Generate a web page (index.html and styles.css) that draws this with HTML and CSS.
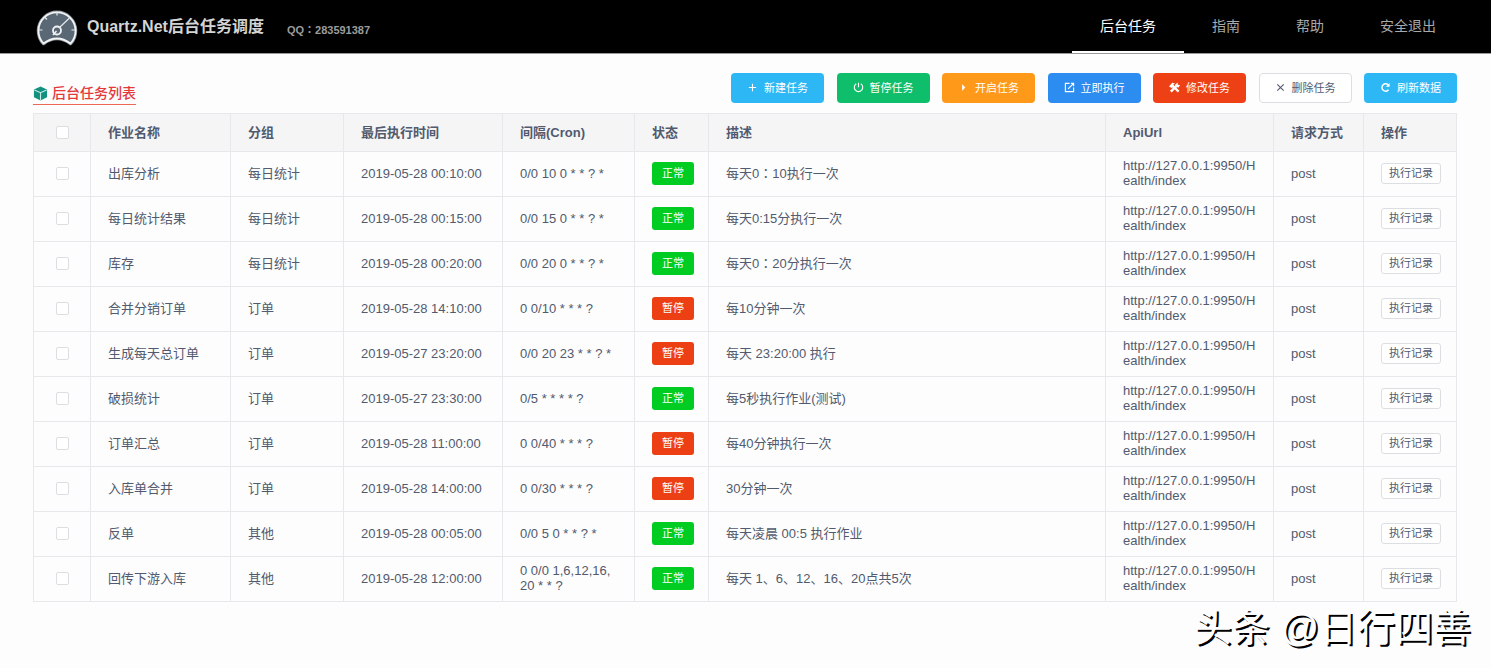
FILE: index.html
```html
<!DOCTYPE html>
<html lang="zh-CN">
<head>
<meta charset="utf-8">
<title>Quartz.Net后台任务调度</title>
<link rel="stylesheet" href="styles.css">
</head>
<body>
<header class="header">
  <svg class="logo" viewBox="0 0 42 38" aria-hidden="true">
    <path d="M7.500 35.500A18.500 18.500 0 1 1 34.500 35.500Q21 25.500 7.500 35.500Z" fill="#5a6876" stroke="#8d9399" stroke-width="3.500" stroke-linejoin="round"/>
    <path d="M7.500 35.500A18.500 18.500 0 1 1 34.500 35.500Q21 25.500 7.500 35.500Z" fill="#5a6876" stroke="#f2f4f5" stroke-width="1.800" stroke-linejoin="round"/>
    <path d="M21 4v3.500M8.500 9l2.500 2.500M3 22h3.500M35.500 22H39M33.500 10L23.500 19.500" fill="none" stroke="#e4e8ea" stroke-width="1.200"/>
    <circle cx="21" cy="22.500" r="4" fill="#5a6876" stroke="#f2f4f5" stroke-width="1.800"/>
    <path d="M17 27l3.500-4" stroke="#f2f4f5" stroke-width="1.500"/>
  </svg>
  <h1 class="brand">Quartz.Net后台任务调度</h1>
  <span class="contact">QQ<span class="colon" lang="zh-TW">：</span>283591387</span>
  <nav class="nav">
    <a class="nav-link active" href="#">后台任务</a>
    <a class="nav-link" href="#">指南</a>
    <a class="nav-link" href="#">帮助</a>
    <a class="nav-link" href="#">安全退出</a>
  </nav>
</header>
<main class="main">
  <div class="toolbar">
    <h2 class="title">
      <svg class="cube" viewBox="0 0 16 16" aria-hidden="true"><path d="M8 .5l7 3.200v8.200L8 15.500l-7-3.600V3.700z" fill="#12917f"/><path d="M1.500 4.200L8 7.200l6.500-3M8 7.200v8" fill="none" stroke="#c9ebe4" stroke-width="1.200"/></svg>
      后台任务列表
    </h2>
    <div class="actions">
      <button class="btn info" type="button"><svg class="icon" viewBox="0 0 12 12"><path d="M6 2v8M2 6h8"/></svg>新建任务</button>
      <button class="btn success" type="button"><svg class="icon" viewBox="0 0 12 12"><path d="M6 .8v5M3.500 2a4.600 4.600 0 1 0 5 0"/></svg>暂停任务</button>
      <button class="btn warning" type="button"><svg class="icon" viewBox="0 0 12 12"><path class="solid" d="M4.500 2.500L8 6 4.500 9.500z"/></svg>开启任务</button>
      <button class="btn primary" type="button"><svg class="icon" viewBox="0 0 12 12"><path d="M6 1.500H1.500v9h9V6M7.500 1.500h3v3M10.500 1.500L4.500 7.500"/></svg>立即执行</button>
      <button class="btn error" type="button"><svg class="icon" viewBox="0 0 12 12"><path d="M2 10.500L9 3.500M3 3l7.500 7.500" stroke-width="2.600"/><path class="solid" d="M0 5L3.500 .8 6.500 1.500 4.500 3l1.500 2L3 6.500zM6.500 3l3-2.500V3l2.500.3L10.500 6 7.500 5.500z"/></svg>修改任务</button>
      <button class="btn plain" type="button"><svg class="icon" viewBox="0 0 12 12"><path d="M2.500 2.500l7 7M9.500 2.500l-7 7"/></svg>删除任务</button>
      <button class="btn info" type="button"><svg class="icon" viewBox="0 0 12 12"><path d="M9.300 8.500A4 4 0 1 1 9 3.200" stroke-width="1.600"/><path class="solid" d="M10.500 1v4.200H6.300z"/></svg>刷新数据</button>
    </div>
  </div>
  <table class="table">
    <colgroup>
      <col class="c-check"><col class="c-name"><col class="c-group"><col class="c-time"><col class="c-cron"><col class="c-state"><col><col class="c-url"><col class="c-method"><col class="c-op">
    </colgroup>
    <thead>
      <tr><th><input type="checkbox" aria-label="全选"></th><th>作业名称</th><th>分组</th><th>最后执行时间</th><th>间隔(Cron)</th><th>状态</th><th>描述</th><th>ApiUrl</th><th>请求方式</th><th>操作</th></tr>
    </thead>
    <tbody>
      <tr><td><input type="checkbox" aria-label="出库分析"></td><td>出库分析</td><td>每日统计</td><td>2019-05-28 00:10:00</td><td>0/0 10 0 * * ? *</td><td><span class="tag ok">正常</span></td><td>每天0<span class="colon" lang="zh-TW">：</span>10执行一次</td><td>http://127.0.0.1:9950/Health/index</td><td>post</td><td><button class="log" type="button">执行记录</button></td></tr>
      <tr><td><input type="checkbox" aria-label="每日统计结果"></td><td>每日统计结果</td><td>每日统计</td><td>2019-05-28 00:15:00</td><td>0/0 15 0 * * ? *</td><td><span class="tag ok">正常</span></td><td>每天0:15分执行一次</td><td>http://127.0.0.1:9950/Health/index</td><td>post</td><td><button class="log" type="button">执行记录</button></td></tr>
      <tr><td><input type="checkbox" aria-label="库存"></td><td>库存</td><td>每日统计</td><td>2019-05-28 00:20:00</td><td>0/0 20 0 * * ? *</td><td><span class="tag ok">正常</span></td><td>每天0<span class="colon" lang="zh-TW">：</span>20分执行一次</td><td>http://127.0.0.1:9950/Health/index</td><td>post</td><td><button class="log" type="button">执行记录</button></td></tr>
      <tr><td><input type="checkbox" aria-label="合并分销订单"></td><td>合并分销订单</td><td>订单</td><td>2019-05-28 14:10:00</td><td>0 0/10 * * * ?</td><td><span class="tag paused">暂停</span></td><td>每10分钟一次</td><td>http://127.0.0.1:9950/Health/index</td><td>post</td><td><button class="log" type="button">执行记录</button></td></tr>
      <tr><td><input type="checkbox" aria-label="生成每天总订单"></td><td>生成每天总订单</td><td>订单</td><td>2019-05-27 23:20:00</td><td>0/0 20 23 * * ? *</td><td><span class="tag paused">暂停</span></td><td>每天 23:20:00 执行</td><td>http://127.0.0.1:9950/Health/index</td><td>post</td><td><button class="log" type="button">执行记录</button></td></tr>
      <tr><td><input type="checkbox" aria-label="破损统计"></td><td>破损统计</td><td>订单</td><td>2019-05-27 23:30:00</td><td>0/5 * * * * ?</td><td><span class="tag ok">正常</span></td><td>每5秒执行作业(测试)</td><td>http://127.0.0.1:9950/Health/index</td><td>post</td><td><button class="log" type="button">执行记录</button></td></tr>
      <tr><td><input type="checkbox" aria-label="订单汇总"></td><td>订单汇总</td><td>订单</td><td>2019-05-28 11:00:00</td><td>0 0/40 * * * ?</td><td><span class="tag paused">暂停</span></td><td>每40分钟执行一次</td><td>http://127.0.0.1:9950/Health/index</td><td>post</td><td><button class="log" type="button">执行记录</button></td></tr>
      <tr><td><input type="checkbox" aria-label="入库单合并"></td><td>入库单合并</td><td>订单</td><td>2019-05-28 14:00:00</td><td>0 0/30 * * * ?</td><td><span class="tag paused">暂停</span></td><td>30分钟一次</td><td>http://127.0.0.1:9950/Health/index</td><td>post</td><td><button class="log" type="button">执行记录</button></td></tr>
      <tr><td><input type="checkbox" aria-label="反单"></td><td>反单</td><td>其他</td><td>2019-05-28 00:05:00</td><td>0/0 5 0 * * ? *</td><td><span class="tag ok">正常</span></td><td>每天凌晨 00:5 执行作业</td><td>http://127.0.0.1:9950/Health/index</td><td>post</td><td><button class="log" type="button">执行记录</button></td></tr>
      <tr><td><input type="checkbox" aria-label="回传下游入库"></td><td>回传下游入库</td><td>其他</td><td>2019-05-28 12:00:00</td><td>0 0/0 1,6,12,16,20 * * ?</td><td><span class="tag ok">正常</span></td><td>每天 1、6、12、16、20点共5次</td><td>http://127.0.0.1:9950/Health/index</td><td>post</td><td><button class="log" type="button">执行记录</button></td></tr>
    </tbody>
  </table>
</main>
<footer class="signature">头条 @日行四善</footer>
</body>
</html>
```
FILE: styles.css
```css
* {
  box-sizing: border-box;
}

body {
  margin: 0;
  background: #fdfdfd;
  color: #515a6e;
  font: 13px/15px "Liberation Sans", "Noto Sans CJK SC", sans-serif;
}

button {
  font-family: inherit;
  cursor: pointer;
}

.colon {
  font-family: "Noto Sans CJK TC", sans-serif;
  line-height: 1;
}

.header {
  display: flex;
  align-items: center;
  height: 54px;
  padding: 0 27px 0 36px;
  background: #000;
  border-bottom: 1px solid #999;
}

.logo {
  width: 42px;
  height: 38px;
}

.brand {
  margin: 0 23px 0 9px;
  color: #d4d4d4;
  font-size: 16px;
  line-height: 24px;
}

.contact {
  padding-top: 8px;
  color: #9c9c9c;
  font-size: 11px;
  font-weight: bold;
}

.nav {
  display: flex;
  align-self: stretch;
  margin-left: auto;
}

.nav-link {
  padding: 0 28px;
  border-bottom: 2px solid transparent;
  color: #a9a9a9;
  font-size: 14px;
  line-height: 52px;
  text-decoration: none;
}

.nav-link.active {
  border-bottom-color: #fff;
  color: #fff;
}

.main {
  padding: 19px 34px 0 33px;
}

.toolbar {
  display: flex;
  align-items: flex-end;
  justify-content: space-between;
  padding-bottom: 10px;
}

.title {
  display: flex;
  align-items: center;
  gap: 4px;
  margin: 0 0 -2px;
  border-bottom: 1px solid #ec6a55;
  color: #e4393c;
  font-size: 14px;
  font-weight: 500;
  line-height: 22px;
}

.cube {
  width: 15px;
  height: 15px;
}

.actions {
  display: flex;
  justify-content: space-between;
  width: 726px;
}

.btn {
  display: flex;
  align-items: center;
  justify-content: center;
  gap: 6px;
  width: 93px;
  height: 30px;
  padding: 0 0 2px;
  border: 1px solid transparent;
  border-radius: 4px;
  color: #fff;
  font-size: 11px;
}

.icon {
  width: 11px;
  height: 11px;
  fill: none;
  stroke: currentColor;
  stroke-width: 1.2;
}

.solid {
  fill: currentColor;
  stroke: none;
}

.info { background: #2db7f5; }
.success { background: #0fbe6b; }
.warning { background: #ff991a; }
.primary { background: #2d8cf0; }
.error { background: #ed4014; }

.plain {
  border-color: #dcdee2;
  background: #fff;
  color: #515a6e;
}

.table {
  width: 100%;
  table-layout: fixed;
  border-collapse: collapse;
  border: 1px solid #dcdee2;
}

.c-check { width: 57px; }
.c-name { width: 140px; }
.c-group { width: 113px; }
.c-time { width: 159px; }
.c-cron { width: 132px; }
.c-state { width: 74px; }
.c-url { width: 168px; }
.c-method { width: 90px; }
.c-op { width: 93px; }

.table th,
.table td {
  height: 45px;
  padding: 0 15px 2px 17px;
  border: 1px solid #e6e8eb;
  text-align: left;
  word-break: break-all;
}

.table td:nth-child(5) {
  padding-right: 20px;
}

.table th {
  height: 38px;
  padding-bottom: 0;
  background: #f5f5f6;
  white-space: nowrap;
}

.table th:first-child,
.table td:first-child {
  padding-right: 0;
  padding-left: 0;
  text-align: center;
}

.table input {
  display: block;
  width: 13px;
  height: 13px;
  margin: 0 auto;
  appearance: none;
  border: 1px solid #dcdee2;
  border-radius: 2px;
  background: #fff;
}

.tag {
  display: block;
  width: 42px;
  border-radius: 3px;
  color: #fff;
  font-size: 11px;
  line-height: 23px;
  text-align: center;
}

.ok { background: #00cc22; }
.paused { background: #ed3f14; }

.log {
  display: block;
  width: 60px;
  height: 21px;
  padding: 0 0 2px;
  border: 1px solid #dcdee2;
  border-radius: 3px;
  background: #fff;
  color: #515a6e;
  font-size: 11px;
  white-space: nowrap;
}

.signature {
  padding: 1px 20px 0 0;
  color: #fff;
  font-size: 38px;
  line-height: 50px;
  text-align: right;
  text-shadow: 2px 2px 0 #000;
}
```
